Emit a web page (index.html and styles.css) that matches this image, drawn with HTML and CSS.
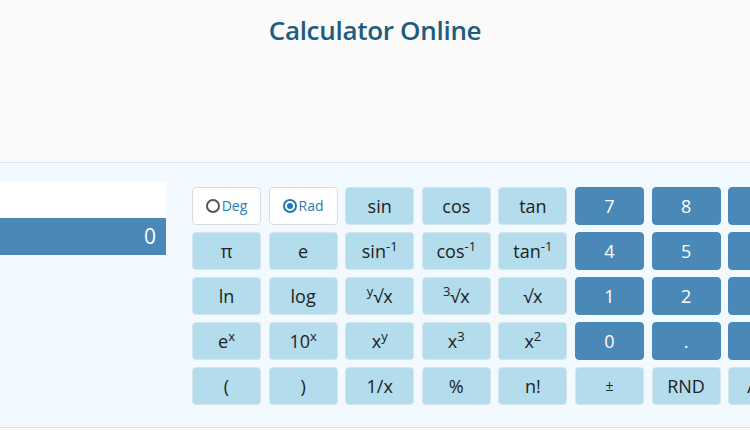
FILE: index.html
```html
<!DOCTYPE html>
<html lang="en">
<head>
    <meta charset="UTF-8">
    <meta name="viewport" content="width=device-width, initial-scale=1.0">
    <title>Calculator Online</title>
    <link rel="stylesheet" href="styles.css">
</head>
<body>
    <!-- Header -->
    <div class="header">
        <h1>Calculator Online</h1>
    </div>

    <!-- Calculator -->
    <div class="calc">
        <div class="screen">
            <div class="screen-top"></div>
            <div class="screen-out">0</div>
        </div>

        <div class="keys">
            <!-- row 1 -->
            <div class="key mode"><span class="radio"></span>Deg</div>
            <div class="key mode"><span class="radio on"></span>Rad</div>
            <div class="key">sin</div>
            <div class="key">cos</div>
            <div class="key">tan</div>
            <div class="key num">7</div>
            <div class="key num">8</div>
            <div class="key num">9</div>

            <!-- row 2 -->
            <div class="key">π</div>
            <div class="key">e</div>
            <div class="key">sin<sup>-1</sup></div>
            <div class="key">cos<sup>-1</sup></div>
            <div class="key">tan<sup>-1</sup></div>
            <div class="key num">4</div>
            <div class="key num">5</div>
            <div class="key num">6</div>

            <!-- row 3 -->
            <div class="key">ln</div>
            <div class="key">log</div>
            <div class="key"><sup>y</sup>√x</div>
            <div class="key"><sup>3</sup>√x</div>
            <div class="key">√x</div>
            <div class="key num">1</div>
            <div class="key num">2</div>
            <div class="key num">3</div>

            <!-- row 4 -->
            <div class="key">e<sup>x</sup></div>
            <div class="key">10<sup>x</sup></div>
            <div class="key">x<sup>y</sup></div>
            <div class="key">x<sup>3</sup></div>
            <div class="key">x<sup>2</sup></div>
            <div class="key num">0</div>
            <div class="key num">.</div>
            <div class="key num">÷</div>

            <!-- row 5 -->
            <div class="key">(</div>
            <div class="key">)</div>
            <div class="key">1/x</div>
            <div class="key">%</div>
            <div class="key">n!</div>
            <div class="key small">±</div>
            <div class="key">RND</div>
            <div class="key">Ans</div>
        </div>
    </div>
</body>
</html>
```

FILE: styles.css
```css
* {
    margin: 0;
    padding: 0;
    box-sizing: border-box;
}
body {
    background: #fbfbfb;
    font-family: 'Open Sans', 'Noto Sans', sans-serif;
    color: #222;
    width: 750px;
    height: 430px;
    overflow: hidden;
}
.header {
    height: 163px;
    background: #fafafa;
    border-bottom: 1px solid #dfe3e6;
    padding-top: 12px;
}
h1 {
    text-align: center;
    font-size: 26px;
    font-weight: 600;
    color: #1e5b7e;
    letter-spacing: -0.3px;
}

/* calculator body */
.calc {
    display: flex;
    height: 265px;
    background: #f3faff;
    border-bottom: 1px solid #dcdfe2;
    padding-top: 19px;
}
.screen {
    width: 166px;
    flex-shrink: 0;
}
.screen-top {
    height: 36px;
    background: #fff;
}
.screen-out {
    height: 37px;
    background: #4a88b8;
    color: #fff;
    font-size: 21px;
    text-align: right;
    padding-right: 10px;
    line-height: 37px;
}
.keys {
    margin-left: 26px;
    margin-top: 5px;
    display: grid;
    grid-template-columns: repeat(8, 69px);
    grid-auto-rows: 38px;
    column-gap: 7.6px;
    row-gap: 7px;
}
.key {
    background: #b3dcec;
    border: 1px solid #d6e4ec;
    border-radius: 4px;
    text-align: center;
    line-height: 36px;
    font-size: 18px;
    color: #222;
    white-space: nowrap;
}
.key sup {
    font-size: 13px;
    line-height: 0;
    vertical-align: 7px;
}
.key.num {
    background: #4a88b8;
    border-color: #4a88b8;
    color: #fff;
}
.key.small {
    font-size: 14px;
}
.key.mode {
    background: #fff;
    border-color: #dcdcdc;
    color: #2d7bb0;
    font-size: 14px;
    display: flex;
    justify-content: center;
    align-items: center;
    gap: 2px;
}
.radio {
    width: 14px;
    height: 14px;
    border: 2px solid #555;
    border-radius: 50%;
    position: relative;
}
.radio.on {
    border-color: #1f7bb0;
}
.radio.on::after {
    content: '';
    position: absolute;
    left: 2px;
    top: 2px;
    width: 6px;
    height: 6px;
    border-radius: 50%;
    background: #1f7bb0;
}
```
